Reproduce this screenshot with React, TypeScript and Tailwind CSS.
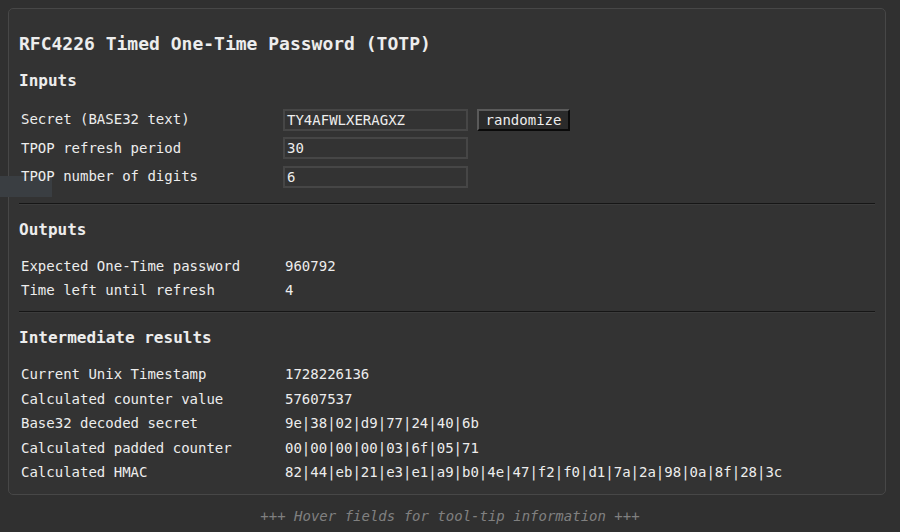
import * as React from 'react'

const mono = { fontFamily: '"DejaVu Sans Mono", "Liberation Mono", monospace' }

const inputs = [
    { label: 'Secret (BASE32 text)', value: 'TY4AFWLXERAGXZ', button: true },
    { label: 'TPOP refresh period', value: '30' },
    { label: 'TPOP number of digits', value: '6' },
]

const outputs = [
    ['Expected One-Time password', '960792'],
    ['Time left until refresh', '4'],
]

const intermediate = [
    ['Current Unix Timestamp', '1728226136'],
    ['Calculated counter value', '57607537'],
    ['Base32 decoded secret', '9e|38|02|d9|77|24|40|6b'],
    ['Calculated padded counter', '00|00|00|00|03|6f|05|71'],
    ['Calculated HMAC', '82|44|eb|21|e3|e1|a9|b0|4e|47|f2|f0|d1|7a|2a|98|0a|8f|28|3c'],
]

function Divider() {
    return <div className="h-[2px] border-t border-t-[#161616] border-b border-b-[#3c3c3c]" />
}

export default function App() {
    return (
        <div className="relative w-full h-[532px] bg-[#303030] text-[#ededed] overflow-hidden" style={mono}>
            <div className="pt-2 pl-2">
                <div className="relative w-[878px] h-[487px] rounded-[5px] border border-[#474747] bg-[#333333] px-[10px] pt-[23px]">
                    {/* tooltip leftover on the left edge, behind the text */}
                    <div className="absolute left-[-9px] top-[167px] w-[52px] h-[21px] bg-[#3a3e42]" />

                    <div className="relative">
                        <h1 className="text-[18px] leading-[24px] font-bold">RFC4226 Timed One-Time Password (TOTP)</h1>

                        <h2 className="mt-[15px] text-[16px] leading-[20px] font-bold">Inputs</h2>
                        <div className="mt-[14.5px]">
                            {inputs.map((row) => (
                                <div key={row.label} className="flex items-center h-[28.5px] text-[14px]">
                                    <div className="w-[264px] pl-[2px]">{row.label}</div>
                                    <div className="w-[185px] h-[22px] border-2 border-[#464646] bg-[#333333] pl-[2px] leading-[18px]">{row.value}</div>
                                    {row.button && (
                                        <div className="ml-[9px] h-[22px] w-[93px] border-2 border-t-[#5a5a5a] border-l-[#5a5a5a] border-b-[#0a0a0a] border-r-[#0a0a0a] bg-[#2a2a2a] text-center leading-[18px]">
                                            randomize
                                        </div>
                                    )}
                                </div>
                            ))}
                        </div>

                        <div className="mt-[12px]"><Divider /></div>

                        <h2 className="mt-[15px] text-[16px] leading-[20px] font-bold">Outputs</h2>
                        <div className="mt-[14.5px]">
                            {outputs.map(([k, v]) => (
                                <div key={k} className="flex items-center h-[24px] text-[14px]">
                                    <div className="w-[264px] pl-[2px]">{k}</div>
                                    <div className="pl-[2px]">{v}</div>
                                </div>
                            ))}
                        </div>

                        <div className="mt-[8px]"><Divider /></div>

                        <h2 className="mt-[15px] text-[16px] leading-[20px] font-bold">Intermediate results</h2>
                        <div className="mt-[15px]">
                            {intermediate.map(([k, v]) => (
                                <div key={k} className="flex items-center h-[24.5px] text-[14px]">
                                    <div className="w-[264px] pl-[2px]">{k}</div>
                                    <div className="pl-[2px]">{v}</div>
                                </div>
                            ))}
                        </div>
                    </div>
                </div>
            </div>

            <div className="mt-[10px] text-center text-[14px] leading-[22px] italic text-[#808080]">
                +++ Hover fields for tool-tip information +++
            </div>
        </div>
    )
}
